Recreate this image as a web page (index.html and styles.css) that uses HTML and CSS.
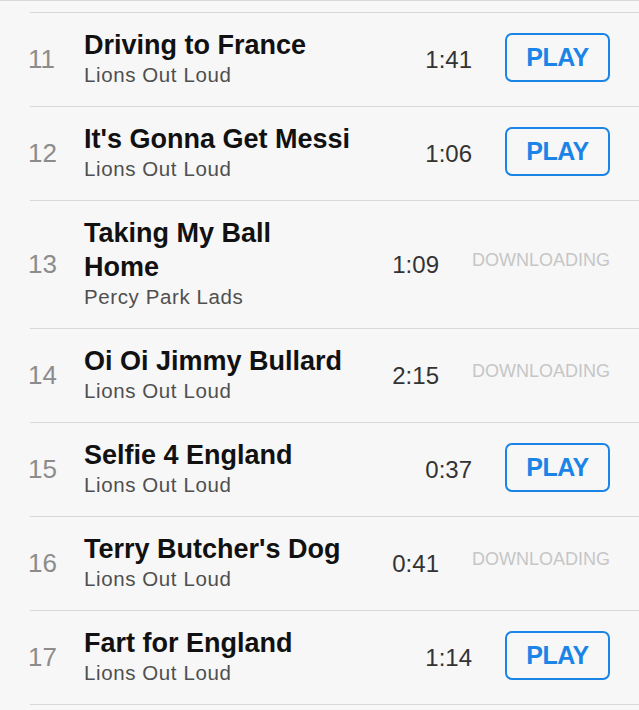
FILE: index.html
```html
<!DOCTYPE html>
<html lang="en">
<head>
  <meta charset="UTF-8">
  <meta name="viewport" content="width=device-width, initial-scale=1">
  <title>Tracks</title>
  <link rel="stylesheet" href="styles.css">
</head>
<body>

  <div class="lead"></div>

  <ul class="tracks">
    <li class="track">
      <span class="num">11</span>
      <div class="info">
        <div class="title">Driving to France</div>
        <div class="artist">Lions Out Loud</div>
      </div>
      <span class="time">1:41</span>
      <button class="play">PLAY</button>
    </li>
    <li class="track">
      <span class="num">12</span>
      <div class="info">
        <div class="title">It's Gonna Get Messi</div>
        <div class="artist">Lions Out Loud</div>
      </div>
      <span class="time">1:06</span>
      <button class="play">PLAY</button>
    </li>
    <li class="track">
      <span class="num">13</span>
      <div class="info">
        <div class="title">Taking My Ball Home</div>
        <div class="artist">Percy Park Lads</div>
      </div>
      <span class="time">1:09</span>
      <span class="status">DOWNLOADING</span>
    </li>
    <li class="track">
      <span class="num">14</span>
      <div class="info">
        <div class="title">Oi Oi Jimmy Bullard</div>
        <div class="artist">Lions Out Loud</div>
      </div>
      <span class="time">2:15</span>
      <span class="status">DOWNLOADING</span>
    </li>
    <li class="track">
      <span class="num">15</span>
      <div class="info">
        <div class="title">Selfie 4 England</div>
        <div class="artist">Lions Out Loud</div>
      </div>
      <span class="time">0:37</span>
      <button class="play">PLAY</button>
    </li>
    <li class="track">
      <span class="num">16</span>
      <div class="info">
        <div class="title">Terry Butcher's Dog</div>
        <div class="artist">Lions Out Loud</div>
      </div>
      <span class="time">0:41</span>
      <span class="status">DOWNLOADING</span>
    </li>
    <li class="track">
      <span class="num">17</span>
      <div class="info">
        <div class="title">Fart for England</div>
        <div class="artist">Lions Out Loud</div>
      </div>
      <span class="time">1:14</span>
      <button class="play">PLAY</button>
    </li>
  </ul>

</body>
</html>
```

FILE: styles.css
```css
:root {
  --bg: #f7f7f7;
  --line: #d9d9d9;
  --ink: #111;
  --grey: #4f4f4f;
  --num: #8c8c8c;
  --blue: #1b84e7;
  --faint: #c6c6c6;
  --font: "Liberation Sans", Arial, sans-serif;
}
*, *::before, *::after { box-sizing: border-box; margin:0; padding:0; }
html, body { background:var(--bg); font:16px/1.2 var(--font); color:var(--ink); overflow:hidden; }

.lead { height:12px; border-top:1px solid var(--line); }

.tracks { list-style:none; }
.track {
  display:flex; align-items:center;
  margin-left:30px;
  padding:15px 29px 16px 0;
  border-top:1px solid var(--line);
}
.track:last-child { border-bottom:1px solid var(--line); }

.num {
  flex:none;
  width:56px; margin-left:-2px;
  font-size:26px; color:var(--num);
  padding-top:2px;
}
.info { flex:1; min-width:0; margin-right:43px; padding-bottom:3px; }
.title { font-size:27px; line-height:34px; font-weight:700; color:var(--ink); }
.artist { font-size:20.5px; line-height:25px; letter-spacing:.6px; color:var(--grey); }

.time {
  flex:none;
  font-size:24px; color:#333;
  margin-right:33px; padding-top:2px;
}

.play {
  flex:none;
  width:105px; height:49px;
  margin-bottom:4px;
  background:transparent;
  border:2px solid var(--blue); border-radius:7px;
  color:var(--blue);
  font:700 25px/1 var(--font); letter-spacing:-.5px;
  cursor:pointer;
}
.status {
  flex:none;
  font-size:18px; color:var(--faint);
  margin-bottom:6px;
}
```
